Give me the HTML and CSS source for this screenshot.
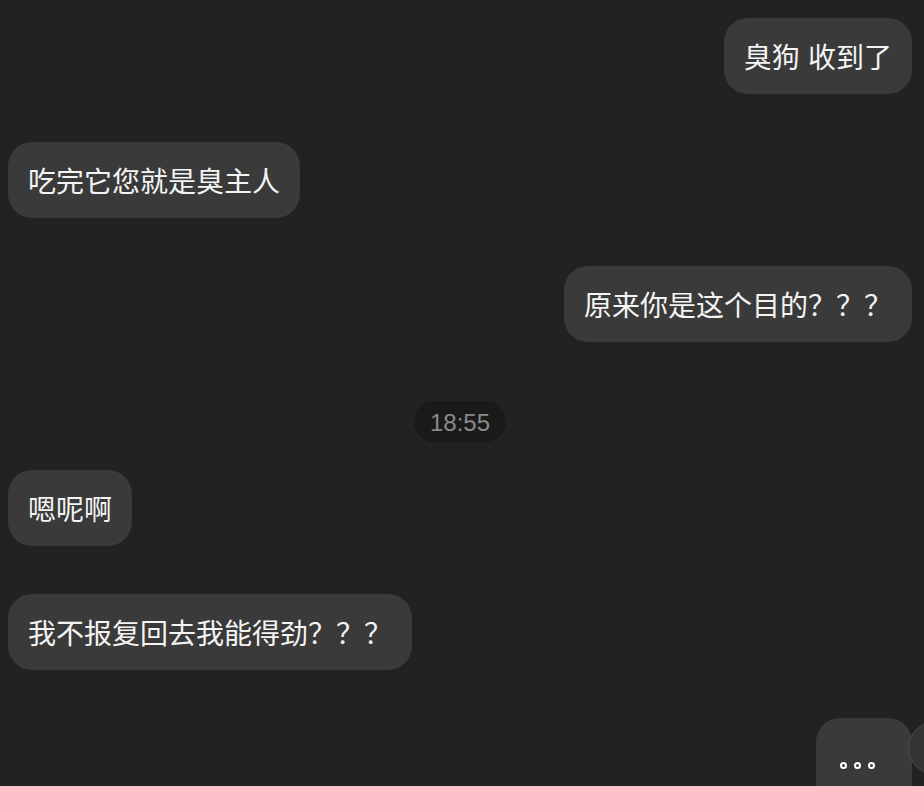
FILE: index.html
```html
<!DOCTYPE html>
<html lang="zh-CN">

<head>
    <meta charset="UTF-8">
    <meta name="viewport" content="width=device-width, initial-scale=1.0">
    <title>聊天</title>
    <link rel="stylesheet" href="styles.css">
</head>

<body>
    <div class="chat">
        <div class="row row-me">
            <div class="bubble">臭狗 收到了</div>
        </div>
        <div class="row row-other">
            <div class="bubble">吃完它您就是臭主人</div>
        </div>
        <div class="row row-me">
            <div class="bubble">原来你是这个目的？？？</div>
        </div>

        <div class="time-row">
            <span class="time">18:55</span>
        </div>

        <div class="row row-other">
            <div class="bubble">嗯呢啊</div>
        </div>
        <div class="row row-other">
            <div class="bubble">我不报复回去我能得劲？？？</div>
        </div>
        <div class="row row-me row-last">
            <div class="bubble bubble-typing">
                <span class="dot"></span>
                <span class="dot"></span>
                <span class="dot"></span>
            </div>
            <!-- scroll down button, mostly off screen -->
            <div class="float-btn"></div>
        </div>
    </div>
</body>

</html>
```

FILE: styles.css
```css
html,
body {
    margin: 0;
    background-color: #222222;
    overflow: hidden;
}

body {
    height: 786px;
}

.chat {
    display: flex;
    flex-direction: column;
    gap: 48px;
    height: 786px;
    box-sizing: border-box;
    overflow: hidden;
    padding: 18px 12px 0 8px;
    font-family: "Noto Sans CJK SC", sans-serif;
}

.row {
    display: flex;
    flex-shrink: 0;
}

.row-me {
    justify-content: flex-end;
}

.row-other {
    justify-content: flex-start;
}

.bubble {
    background-color: #3a3a3a;
    color: #f4f4f4;
    font-size: 28px;
    line-height: 36px;
    padding: 20px;
    border-radius: 24px;
    white-space: nowrap;
    word-spacing: 2px;
}

.time-row {
    display: flex;
    flex-shrink: 0;
    justify-content: center;
    margin: 11px 0 -20px;
}

.time {
    background-color: #1a1a1a;
    color: #8a8a8a;
    font-family: "Liberation Sans", Arial, sans-serif;
    font-size: 24px;
    line-height: 25px;
    padding: 9px 16px 7px;
    border-radius: 21px;
}

.row-last {
    position: relative;
}

.bubble-typing {
    width: 72px;
    height: 80px;
    padding: 44px 0 0 24px;
    display: flex;
    gap: 7px;
    align-items: flex-start;
}

.dot {
    width: 3px;
    height: 3px;
    border: 2px solid #ffffff;
    border-radius: 50%;
    background-color: #3a3a3a;
}

.float-btn {
    position: absolute;
    right: -48px;
    top: 4px;
    width: 50px;
    height: 50px;
    border-radius: 50%;
    border: 1px solid #4a4a4a;
    background-color: #353535;
}
```
